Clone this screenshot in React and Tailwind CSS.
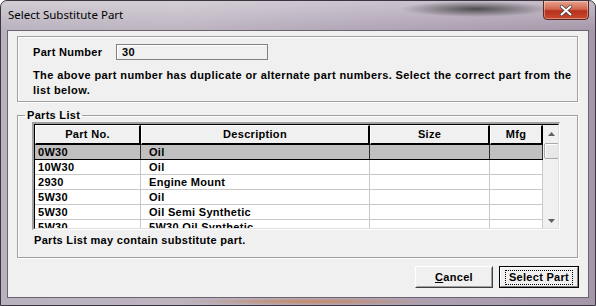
import React from "react";

const cols = [
  { key: "no", label: "Part No.", w: "w-[106px]", pl: "pl-[3px]" },
  { key: "desc", label: "Description", w: "w-[229px]", pl: "pl-[8px]" },
  { key: "size", label: "Size", w: "w-[120px]", pl: "pl-[4px]" },
  { key: "mfg", label: "Mfg", w: "w-[53px]", pl: "pl-[4px]" },
];

const rows = [
  ["0W30", "Oil", "", ""],
  ["10W30", "Oil", "", ""],
  ["2930", "Engine Mount", "", ""],
  ["5W30", "Oil", "", ""],
  ["5W30", "Oil Semi Synthetic", "", ""],
  ["5W30", "5W30 Oil Synthetic", "", ""],
];

const font = { fontFamily: '"Liberation Sans", Arial, sans-serif' };

// Etched group box, like the old win32 one
const GroupBox = ({ title, className, children }) => (
  <fieldset className={"border border-[#a0a0a0] shadow-[inset_1px_1px_0_#fff,1px_1px_0_#fff] " + className}>
    {title && <legend className="ml-[7px] px-[2px] leading-[12px]">{title}</legend>}
    {children}
  </fieldset>
);

const Scrollbar = () => (
  <div className="w-[17px] bg-[#f0f0f0] flex flex-col items-center shrink-0">
    <div className="h-[18px] w-full flex items-center justify-center">
      <svg width="7" height="4" viewBox="0 0 7 4"><path d="M3.5 0 L7 4 L0 4 Z" fill="#606060" /></svg>
    </div>
    <div className="h-[16px] w-[15px] bg-[#e8e8e8] border border-[#a8a8a8] rounded-[2px] shadow-[inset_1px_1px_0_#fff]" />
    <div className="flex-1" />
    <div className="h-[14px] w-full flex items-center justify-center">
      <svg width="7" height="4" viewBox="0 0 7 4"><path d="M0 0 L7 0 L3.5 4 Z" fill="#606060" /></svg>
    </div>
  </div>
);

const PartsTable = () => (
  <div className="w-[528px] h-[108px] border-t-2 border-l-2 border-b border-r border-t-[#a0a0a0] border-l-[#a0a0a0] border-b-white border-r-white ml-[14px] mt-[1px]">
    <div className="w-full h-full border border-black border-r-[#e0e0e0] border-b-[#e0e0e0] flex bg-white overflow-hidden">
      <div className="flex flex-col w-[508px]">
        <div className="flex h-[20px] shrink-0">
          {cols.map((c) => (
            <div
              key={c.key}
              className={c.w + " h-[20px] bg-[#f0f0f0] border-t border-l border-t-white border-l-white border-r-2 border-b-2 border-black flex items-center justify-center"}
            >
              {c.label}
            </div>
          ))}
        </div>
        {rows.map((r, i) => (
          <div
            key={i}
            className={
              "flex h-[15px] shrink-0 border-b " +
              (i === 0 ? "bg-[#c0c0c0] border-black" : "bg-white border-[#c8c8c8]")
            }
          >
            {r.map((v, j) => (
              <div
                key={j}
                className={
                  cols[j].w + " " + cols[j].pl + " leading-[14px] whitespace-nowrap border-r " +
                  (i === 0 ? "border-[#303030]" : "border-[#c8c8c8]")
                }
              >
                {v}
              </div>
            ))}
          </div>
        ))}
      </div>
      <Scrollbar />
    </div>
  </div>
);

const Button = ({ children, primary, className }) => (
  <div
    className={
      "h-[22px] flex items-center justify-center bg-[#f0f0f0] " +
      (primary
        ? "border border-black "
        : "border border-t-white border-l-white border-r-[#404040] border-b-[#404040] ") +
      className
    }
  >
    <div
      className={
        "w-full h-full flex items-center justify-center " +
        (primary
          ? "border border-t-white border-l-white border-r-[#808080] border-b-[#808080]"
          : "border border-t-[#f0f0f0] border-l-[#f0f0f0] border-r-[#a0a0a0] border-b-[#a0a0a0]")
      }
    >
      {primary ? (
        <span className="border border-dotted border-black px-[3px] leading-[13px]">{children}</span>
      ) : (
        children
      )}
    </div>
  </div>
);

export default function App() {
  return (
    <div
      className="w-[596px] h-[306px] relative flex flex-col overflow-hidden rounded-t-[7px] border border-[#3a3540] bg-[linear-gradient(90deg,#b9b1be_0%,#bdb4c0_30%,#b1a5b6_60%,#a597a9_100%)]"
    >
      {/* glass smudges */}
      <div className="absolute left-0 top-0 w-full h-[30px] bg-[linear-gradient(180deg,rgba(255,255,255,0.35),rgba(255,255,255,0))]" />
      <div className="absolute left-[400px] top-0 w-[150px] h-[16px] bg-[radial-gradient(ellipse_at_center,rgba(40,40,40,0.75),rgba(40,40,40,0)_70%)]" />

      <div className="h-[29px] shrink-0 flex items-center pl-[7px] relative" style={{ fontFamily: '"Noto Sans", "Open Sans", sans-serif' }}>
        <span className="text-[11.5px] text-black -mt-[2px]">Select Substitute Part</span>
        <div className="absolute right-[6px] top-[-1px] w-[46px] h-[20px] rounded-b-[4px] border border-[#5a2a22] bg-[linear-gradient(180deg,#e9a490_0%,#d2674f_45%,#b8301c_55%,#c84a30_100%)] flex items-center justify-center shadow-[inset_0_0_0_1px_rgba(255,255,255,0.35)]">
          <svg width="12" height="11" viewBox="0 0 12 11">
            <path d="M1.5 1.5 L10.5 9.5 M10.5 1.5 L1.5 9.5" stroke="#4a3f3f" strokeWidth="3.6" strokeLinecap="round" />
            <path d="M1.5 1.5 L10.5 9.5 M10.5 1.5 L1.5 9.5" stroke="#ffffff" strokeWidth="2" strokeLinecap="round" />
          </svg>
        </div>
      </div>

      <div className="flex-1 mx-[6px] mb-[7px] bg-[#f0f0f0] border border-[#6b6470] text-[11px] font-bold tracking-[0.3px] text-black flex flex-col" style={font}>
        <div className="pl-[9px] pr-[10px] pt-[5px]">
          <GroupBox className="h-[66px] pl-[15px] pr-[2px] pt-[7px]">
            <div className="flex items-center h-[16px]">
              <span className="w-[83px]">Part Number</span>
              <div className="w-[152px] h-[16px] border border-[#808080] pl-[5px] leading-[14px] shadow-[inset_1px_1px_0_#fff]">30</div>
            </div>
            <p className="mt-[8px] leading-[15px] tracking-[0.4px]">
              The above part number has duplicate or alternate part numbers. Select the correct part from the list below.
            </p>
          </GroupBox>
        </div>
        <div className="pl-[9px] pr-[10px] mt-[7px]">
          <GroupBox title="Parts List" className="h-[149px]">
            <PartsTable />
            <div className="pl-[16px] mt-[4px] leading-[12px]">Parts List may contain substitute part.</div>
          </GroupBox>
        </div>
        <div className="flex justify-end gap-[6px] pr-[9px] mt-[8px]">
          <Button className="w-[78px]">
            <span><span className="underline">C</span>ancel</span>
          </Button>
          <Button primary className="w-[80px]">Select Part</Button>
        </div>
      </div>

      {/* bottom glow */}
      <div className="absolute left-[180px] bottom-0 w-[260px] h-[7px] bg-[radial-gradient(ellipse_at_center,rgba(200,130,80,0.8),rgba(200,130,80,0)_70%)]" />
    </div>
  );
}
